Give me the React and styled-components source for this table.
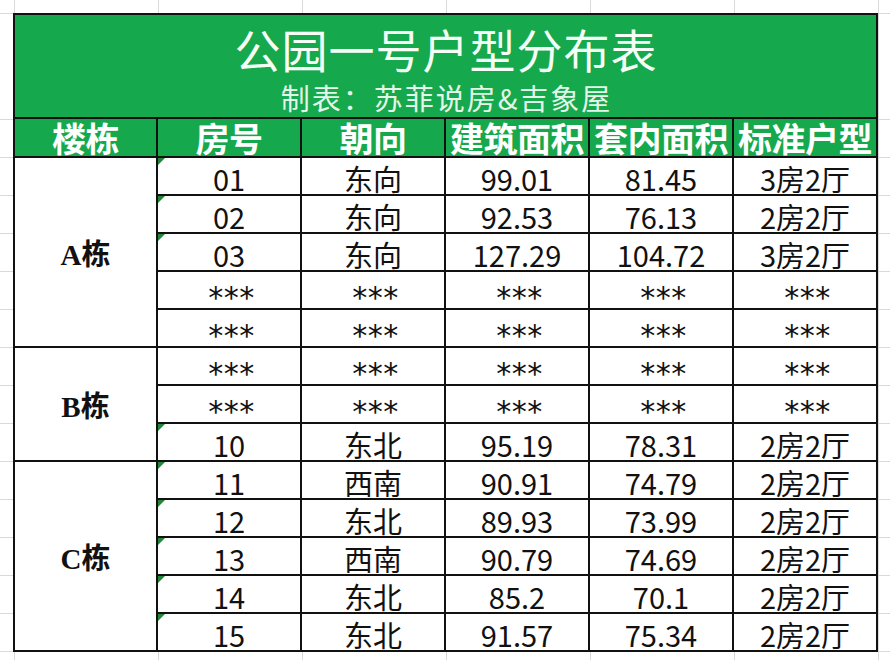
import React from 'react';
import styled, { createGlobalStyle } from 'styled-components';

const GlobalStyle = createGlobalStyle`
  html, body {
    margin: 0;
    padding: 0;
    background: #fff;
  }
  * {
    box-sizing: border-box;
  }
`;

const GREEN = '#16a84c';
const GRID = '#d9d9d9';
const LINE = '#111';

// spreadsheet page with its faint cell gridlines
const Sheet = styled.div`
  width: 890px;
  height: 660px;
  padding: 13px 0 0 13px;
  overflow: hidden;
  background-color: #fff;
  background-image:
    linear-gradient(to right, ${GRID} 1px, transparent 1px),
    repeating-linear-gradient(to bottom, ${GRID} 0 1px, transparent 1px 38px),
    linear-gradient(${GRID}, ${GRID});
  background-size: 144px 100%, 100% calc(100% - 119px), 100% 1px;
  background-position: 14px 0, 0 119px, 0 13px;
  background-repeat: repeat-x, no-repeat, no-repeat;
`;

const Table = styled.div`
  width: 865px;
  border: 2px solid ${LINE};
  background: #fff;
`;

const TitleBand = styled.div`
  height: 102px;
  background: ${GREEN};
  display: flex;
  flex-direction: column;
  align-items: center;
  padding-top: 10px;
  gap: 12px;
  font-family: 'Noto Sans CJK SC', sans-serif;
  line-height: 1;
`;

const Title = styled.h1`
  margin: 0;
  font-size: 46px;
  font-weight: 400;
  letter-spacing: 1px;
  padding-left: 1px;
  color: #f4fff6;
`;

const Subtitle = styled.div`
  font-size: 29px;
  letter-spacing: 2px;
  padding-left: 2px;
  color: #e4f6e8;
`;

const Grid = styled.div`
  display: grid;
  grid-template-columns: 141px repeat(5, 144px);
  grid-template-rows: 39px repeat(13, 38px);
`;

const HeadCell = styled.div`
  background: ${GREEN};
  border-top: 2px solid ${LINE};
  border-left: ${({ $first }) => ($first ? 'none' : `2px solid ${LINE}`)};
  overflow: hidden;
  padding-top: 2px;
  text-align: center;
  font-family: 'Noto Sans CJK SC', sans-serif;
  font-weight: 700;
  font-size: 34px;
  line-height: 1;
  letter-spacing: -0.5px;
  color: #fff;
  white-space: nowrap;
`;

const BlockCell = styled.div`
  grid-column: 1;
  grid-row: span ${({ $span }) => $span};
  border-top: 2px solid ${LINE};
  display: flex;
  align-items: center;
  justify-content: center;
  font-family: 'Liberation Serif', 'Noto Sans CJK SC', serif;
  font-weight: 700;
  font-size: 29px;
  color: #111;
`;

const Cell = styled.div`
  position: relative;
  border-top: 2px solid ${LINE};
  border-left: 2px solid ${LINE};
  display: flex;
  align-items: flex-end;
  justify-content: center;
  padding-bottom: 1px;
  overflow: hidden;
  font-family: 'Noto Sans CJK SC', sans-serif;
  font-size: 29px;
  line-height: 1;
  color: #111;
  white-space: nowrap;

  ${({ $stars }) =>
    $stars &&
    `
    align-items: flex-start;
    padding: 11px 0 0 2px;
    font-family: 'DejaVu Sans Mono', monospace;
    font-size: 30px;
    letter-spacing: -2.5px;
  `}

  ${({ $flag }) =>
    $flag &&
    `
    &::before {
      content: '';
      position: absolute;
      left: 0;
      top: 0;
      border-top: 7px solid #25853a;
      border-right: 7px solid transparent;
    }
  `}
`;

const headers = ['楼栋', '房号', '朝向', '建筑面积', '套内面积', '标准户型'];

const stars = ['***', '***', '***', '***', '***'];

const blocks = [
  {
    name: 'A栋',
    rows: [
      ['01', '东向', '99.01', '81.45', '3房2厅'],
      ['02', '东向', '92.53', '76.13', '2房2厅'],
      ['03', '东向', '127.29', '104.72', '3房2厅'],
      stars,
      stars,
    ],
  },
  {
    name: 'B栋',
    rows: [stars, stars, ['10', '东北', '95.19', '78.31', '2房2厅']],
  },
  {
    name: 'C栋',
    rows: [
      ['11', '西南', '90.91', '74.79', '2房2厅'],
      ['12', '东北', '89.93', '73.99', '2房2厅'],
      ['13', '西南', '90.79', '74.69', '2房2厅'],
      ['14', '东北', '85.2', '70.1', '2房2厅'],
      ['15', '东北', '91.57', '75.34', '2房2厅'],
    ],
  },
];

export default function App() {
  return (
    <>
      <GlobalStyle />
      <Sheet>
        <Table>
          <TitleBand>
            <Title>公园一号户型分布表</Title>
            <Subtitle>制表：苏菲说房&amp;吉象屋</Subtitle>
          </TitleBand>
          <Grid>
            {headers.map((h, i) => (
              <HeadCell key={h} $first={i === 0}>
                {h}
              </HeadCell>
            ))}
            {blocks.map((block) => (
              <React.Fragment key={block.name}>
                <BlockCell $span={block.rows.length}>{block.name}</BlockCell>
                {block.rows.map((row, r) =>
                  row.map((value, c) => (
                    <Cell
                      key={`${block.name}-${r}-${c}`}
                      $stars={value === '***'}
                      $flag={c === 0 && value !== '***'}
                    >
                      {value}
                    </Cell>
                  ))
                )}
              </React.Fragment>
            ))}
          </Grid>
        </Table>
      </Sheet>
    </>
  );
}
